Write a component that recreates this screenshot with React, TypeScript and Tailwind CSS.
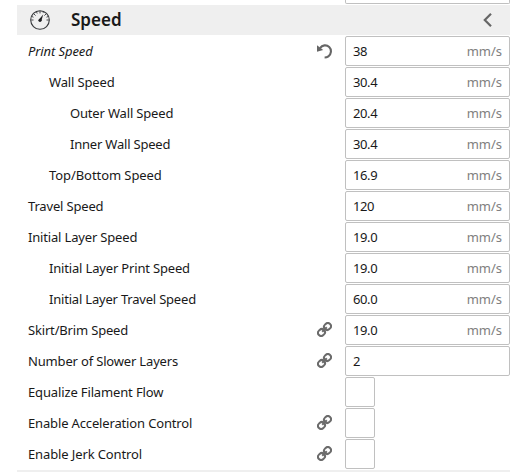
type Row = {
  label: string;
  indent?: 0 | 1 | 2;
  tracking?: string;
  value?: string;
  unit?: boolean;
  icon?: "reset" | "link";
  italic?: boolean;
};

const rows: Row[] = [
  { label: "Print Speed", value: "38", unit: true, icon: "reset", italic: true, tracking: "tracking-[-0.1px]" },
  { label: "Wall Speed", indent: 1, value: "30.4", unit: true, tracking: "tracking-[-0.15px]" },
  { label: "Outer Wall Speed", indent: 2, value: "20.4", unit: true },
  { label: "Inner Wall Speed", indent: 2, value: "30.4", unit: true, tracking: "tracking-[-0.21px]" },
  { label: "Top/Bottom Speed", indent: 1, value: "16.9", unit: true, tracking: "tracking-[-0.07px]" },
  { label: "Travel Speed", value: "120", unit: true },
  { label: "Initial Layer Speed", value: "19.0", unit: true },
  { label: "Initial Layer Print Speed", indent: 1, value: "19.0", unit: true },
  { label: "Initial Layer Travel Speed", indent: 1, value: "60.0", unit: true, tracking: "tracking-[-0.2px]" },
  { label: "Skirt/Brim Speed", value: "19.0", unit: true, icon: "link" },
  { label: "Number of Slower Layers", value: "2", icon: "link" },
  { label: "Equalize Filament Flow", tracking: "tracking-[-0.14px]" },
  { label: "Enable Acceleration Control", icon: "link", tracking: "tracking-[-0.15px]" },
  { label: "Enable Jerk Control", icon: "link", tracking: "tracking-[-0.12px]" },
];

const indents = ["pl-[11px]", "pl-8", "pl-[53px]"];

function Gauge() {
  return (
    <svg className="ml-[13px] size-5" viewBox="0 0 20 20" fill="none" stroke="#35373a">
      <circle cx="10" cy="10" r="9.3" strokeWidth="1.1" />
      <path
        d="M10 1v2.4M4 4l1.6 1.6M16 4l-1.6 1.6M1.2 10h2.3M18.8 10h-2.3M6.5 1.9l.7 1.6M13.5 1.9l-.4.9M1.9 6.5l1.6.7M18.1 6.5l-1.6.7"
        strokeWidth=".9"
      />
      <path d="M13.2 4.6 8.9 9.5l2.5 1.3z" fill="#202124" stroke="none" />
      <circle cx="10" cy="10.3" r="1.6" fill="#202124" stroke="none" />
    </svg>
  );
}

function ResetIcon() {
  return (
    <svg className="size-[15px]" viewBox="0 0 15 15" fill="none">
      <path
        d="M3 4.1C5.2 1 9.5.4 12.2 3c2.6 2.7 2.2 7.1-.8 9.3-1.1.8-2.4 1.2-3.8 1.2"
        stroke="#666"
        strokeWidth="2.1"
      />
      <path d="M0 1.2v6.6l6.2-1.9z" fill="#666" />
    </svg>
  );
}

function LinkIcon() {
  return (
    <svg className="mb-px size-[15px]" viewBox="0 0 15 15" fill="none" stroke="#6b6b6b" strokeWidth="2">
      <rect x="-3.6" y="-3.1" width="7.2" height="6.2" rx="3.1" transform="translate(4.5 10.5) rotate(-45)" />
      <rect x="-3.6" y="-3.1" width="7.2" height="6.2" rx="3.1" transform="translate(10.5 4.5) rotate(-45)" />
      <path d="M5.2 9.8 9.8 5.2" />
    </svg>
  );
}

function Setting({ row }: { row: Row }) {
  return (
    <div className="flex h-[30px] items-center">
      <div
        className={`w-[300px] whitespace-nowrap ${row.tracking ?? "tracking-[-0.17px]"} ${indents[row.indent ?? 0]} ${row.italic ? "italic" : ""}`}
      >
        {row.label}
      </div>
      <div className="w-7">
        {row.icon === "reset" && <ResetIcon />}
        {row.icon === "link" && <LinkIcon />}
      </div>
      {row.value ? (
        <div className="flex h-[30px] w-[165px] items-center justify-between rounded-[2px] border border-[#c0c0c0] bg-white px-[7px]">
          <span className="tracking-[-0.4px]">{row.value}</span>
          <span className="text-[#808080]">{row.unit && "mm/s"}</span>
        </div>
      ) : (
        <div className="size-[30px] rounded-[2px] border border-[#c0c0c0] bg-white" />
      )}
    </div>
  );
}

export default function App() {
  return (
    <main className="h-[472px] w-[517px] overflow-hidden bg-white pr-[7px] pl-[17px] font-['Noto_Sans','Open_Sans',sans-serif] text-[13px] leading-[18px] text-[#191919]">
      <div className="ml-auto h-1 w-[165px] rounded-b-[2px] border border-t-0 border-[#c0c0c0]" />
      <header className="mt-px flex h-[30px] items-center bg-[#efefef]">
        <Gauge />
        <h2 className="ml-[21px] text-[17px] leading-6 font-semibold">Speed</h2>
        <svg className="mr-[18px] ml-auto h-[14px] w-[9px]" viewBox="0 0 9 14" fill="none" stroke="#666" strokeWidth="2.2">
          <path d="M8 .8 1.8 7 8 13.2" />
        </svg>
      </header>
      <section className="mt-px flex flex-col gap-px">
        {rows.map((row) => (
          <Setting key={row.label} row={row} />
        ))}
      </section>
      <div className="mt-px h-[30px] bg-[#efefef]" />
    </main>
  );
}
